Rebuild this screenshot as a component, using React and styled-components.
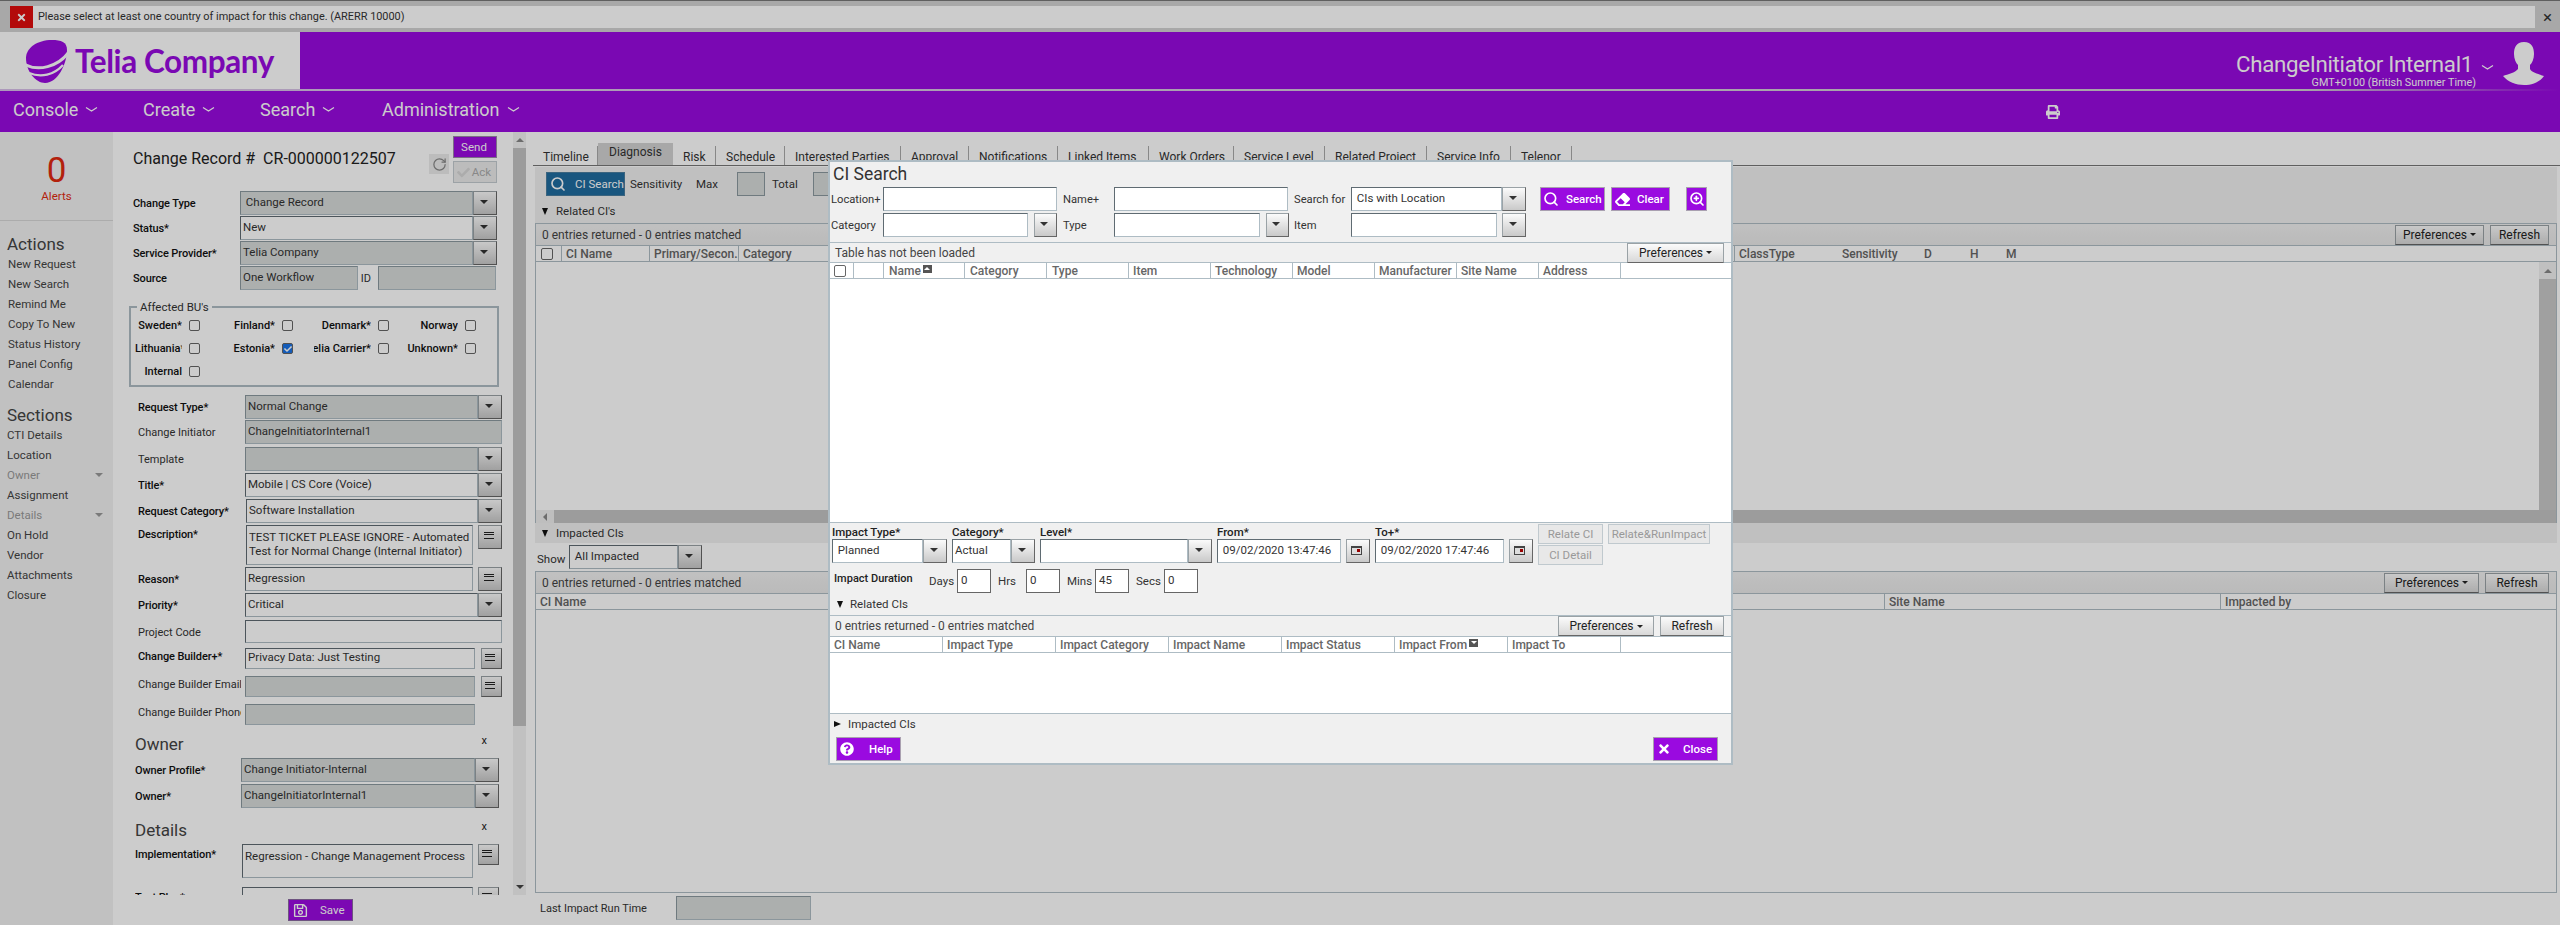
import React from "react";
import styled, { createGlobalStyle } from "styled-components";
import { FaTimes, FaQuestionCircle, FaRegSave, FaEraser, FaPrint, FaCheck } from "react-icons/fa";
import { Search as SearchIcon, ZoomIn, RotateCw } from "lucide-react";

const Global = createGlobalStyle`
  html, body { margin: 0; padding: 0; background: #fff; }
  body { font-family: Roboto, "Liberation Sans", sans-serif; font-size: 12px; color: #222; }
  * { box-sizing: border-box; }
`;

const PURPLE = "#9a0ae0";
const EDGE = "#aebcc4";

const Page = styled.div`
  position: relative;
  width: 2560px;
  height: 925px;
  overflow: hidden;
  display: flex;
  flex-direction: column;
`;
const Overlay = styled.div`
  position: absolute;
  inset: 0;
  background: rgba(0, 0, 0, 0.2);
  z-index: 1;
`;

/* error bar */
const ErrorBar = styled.div`
  height: 32px;
  flex: none;
  display: flex;
  align-items: stretch;
  padding: 6px 0 4px 10px;
  background: #d2d2d2;
  border-top: 1px solid #777;
`;
const ErrorIcon = styled.div`
  width: 23px;
  margin-top: -1px;
  background: #e00d0d;
  color: #fff;
  display: flex;
  align-items: center;
  justify-content: center;
  font-size: 11px;
`;
const ErrorText = styled.div`
  flex: 1;
  margin-top: -1px;
  background: #fff;
  padding-left: 5px;
  line-height: 22px;
  font-size: 10.9px;
  color: #333;
`;
const ErrorClose = styled.div`
  width: 25px;
  margin-top: -1px;
  display: flex;
  align-items: center;
  justify-content: center;
  color: #333;
  font-size: 17px;
`;

/* header */
const Header = styled.header`
  height: 57px;
  flex: none;
  display: flex;
  background: #990ae0;
`;
const LogoBox = styled.div`
  width: 300px;
  background: #fff;
  display: flex;
  align-items: center;
  padding-left: 26px;
  gap: 7px;
`;
const LogoText = styled.div`
  font-family: Lato, sans-serif;
  font-weight: 700;
  font-size: 31.5px;
  color: #990ae0;
  letter-spacing: -0.4px;
  white-space: nowrap;
  padding-top: 1px;
`;
const User = styled.div`
  flex: 1;
  display: flex;
  justify-content: flex-end;
  color: #fff;
  padding: 10px 15px 0 0;
`;
const UserText = styled.div`
  display: flex;
  flex-direction: column;
  align-items: flex-end;
`;
const UserName = styled.div`
  font-size: 22.3px;
  line-height: 28px;
  margin-top: 8px;
  margin-right: 3px;
  letter-spacing: -0.3px;
`;
const UserZone = styled.div`
  font-size: 10.8px;
  line-height: 14px;
  margin-top: -2px;
`;
const UserCaret = styled.div`
  margin: 18px 9px 0 5px;
`;
const HeaderRule = styled.div`
  height: 2px;
  flex: none;
  background: linear-gradient(to right, #d9c0ea, #d0d0d0 90%, #990ae0 100%);
`;
const Nav = styled.nav`
  height: 41px;
  flex: none;
  background: #990ae0;
  color: #fff;
  display: flex;
  align-items: center;
  padding-bottom: 4px;
`;
const NavItem = styled.div`
  width: ${(p) => p.$w}px;
  padding-left: ${(p) => p.$pl || 0}px;
  display: flex;
  align-items: center;
  gap: 7px;
  font-size: 18px;
  white-space: nowrap;
`;
const PrintBox = styled.div`
  margin-left: 1494px;
  margin-top: 4px;
  font-size: 14px;
  display: flex;
`;

/* body */
const Main = styled.div`
  flex: 1;
  display: flex;
  min-height: 0;
`;
const Sidebar = styled.aside`
  width: 113px;
  flex: none;
  background: #f2f2f2;
`;
const Alerts = styled.div`
  height: 89px;
  border-bottom: 1px solid #d8d8d8;
  text-align: center;
  color: #e02a10;
`;
const AlertCount = styled.div`
  font-size: 35px;
  line-height: 40px;
  padding-top: 19px;
  box-sizing: content-box;
`;
const AlertLabel = styled.div`
  font-size: 11.5px;
  margin-top: -2px;
`;
const SideHead = styled.div`
  font-size: 17px;
  line-height: 20px;
  color: #444;
  padding-left: 7px;
  margin-top: ${(p) => p.$mt}px;
`;
const SideLink = styled.div`
  height: 20px;
  line-height: 20px;
  font-size: 11.5px;
  padding-left: ${(p) => p.$pl || 7}px;
  padding-right: 10px;
  display: flex;
  align-items: center;
  justify-content: space-between;
  color: ${(p) => (p.$muted ? "#999" : "#444")};
`;
const Caret = styled.i`
  display: block;
  width: 0;
  height: 0;
  border-left: ${(p) => p.$s || 4}px solid transparent;
  border-right: ${(p) => p.$s || 4}px solid transparent;
  border-top: ${(p) => p.$s || 4}px solid ${(p) => p.$c || "#444"};
`;

const FormColumn = styled.div`
  width: 413px;
  flex: none;
  display: flex;
  flex-direction: column;
`;
const FormScroll = styled.div`
  height: 763px;
  display: flex;
  overflow: hidden;
`;
const FormBody = styled.div`
  width: 400px;
  flex: none;
  overflow: hidden;
`;
const VScroll = styled.div`
  width: 13px;
  background: #f2f2f2;
  display: flex;
  flex-direction: column;
  align-items: center;
  justify-content: space-between;
  padding: 6px 0;
`;
const VThumb = styled.div`
  flex: none;
  width: 100%;
  height: 578px;
  background: #c4c4c4;
  margin-top: 6px;
  margin-bottom: auto;
`;
const UpTri = styled.i`
  display: block;
  width: 0;
  height: 0;
  border-left: 4px solid transparent;
  border-right: 4px solid transparent;
  border-bottom: 4px solid #888;
`;
const SaveBar = styled.div`
  flex: 1;
  display: flex;
  padding: 4px 0 0 175px;
`;
const RecordHead = styled.div`
  height: 59px;
  display: flex;
  padding: 4px 0 0 20px;
`;
const RecordTitle = styled.div`
  width: 296px;
  font-size: 16px;
  line-height: 22px;
  margin-top: 12px;
  white-space: pre;
  color: #222;
`;
const RefreshBox = styled.div`
  width: 20px;
  height: 20px;
  margin-top: 18px;
  background: #ececec;
  color: #888;
  display: flex;
  align-items: center;
  justify-content: center;
`;
const RecordButtons = styled.div`
  margin-left: 4px;
  display: flex;
  flex-direction: column;
  gap: 3px;
`;
const SmallButton = styled.div`
  width: 44px;
  height: 22px;
  display: flex;
  align-items: center;
  justify-content: ${(p) => (p.$ghost ? "space-between" : "center")};
  padding: 0 5px 0 3px;
  font-size: 11.5px;
  background: ${(p) => (p.$ghost ? "#ececec" : PURPLE)};
  color: ${(p) => (p.$ghost ? "#aaa" : "#fff")};
  border: 1px solid ${(p) => (p.$ghost ? "#c4cbd0" : "#9c8aa8")};
`;

const Row = styled.div`
  display: flex;
  height: ${(p) => p.$h || 24}px;
  margin-top: ${(p) => p.$mt || 0}px;
  padding-left: ${(p) => p.$pl || 20}px;
`;
const Label = styled.div`
  width: ${(p) => p.$w || 107}px;
  flex: none;
  padding-top: ${(p) => p.$pt || 6}px;
  line-height: 14px;
  font-size: 11px;
  font-weight: ${(p) => (p.$bold ? 500 : 400)};
  letter-spacing: ${(p) => (p.$bold ? "-0.1px" : "0")};
  color: ${(p) => (p.$bold ? "#111" : "#333")};
  white-space: nowrap;
  overflow: hidden;
`;
const Field = styled.div`
  width: ${(p) => p.$w}px;
  height: ${(p) => p.$h || 24}px;
  flex: none;
  margin-left: ${(p) => p.$ml || 0}px;
  background: ${(p) => (p.$off ? "#d8dbda" : "#fff")};
  border: 1px solid ${EDGE};
  border-top-color: ${(p) => (p.$off ? "#8b999f" : "#5f6b72")};
  border-left-color: ${(p) => (p.$off ? "#8b999f" : "#5f6b72")};
  padding: ${(p) => (p.$tall ? "4px 2px" : "0 2px")};
  line-height: ${(p) => (p.$tall ? "14px" : `${(p.$h || 24) - 4}px`)};
  font-size: 11.5px;
  color: #333;
  overflow: hidden;
  white-space: ${(p) => (p.$tall ? "normal" : "nowrap")};
`;
const ArrowBtn = styled.div`
  width: ${(p) => p.$w || 24}px;
  height: ${(p) => p.$h || 24}px;
  flex: none;
  margin-left: ${(p) => p.$ml || 0}px;
  border: 1px solid #9aa2a6;
  border-bottom-color: #666;
  border-right-color: #666;
  background: linear-gradient(#fbfbfb, #c9c9c9);
  display: flex;
  align-items: center;
  justify-content: center;
  padding: 0 3px 3px 0;
`;
const MenuLines = styled.i`
  display: block;
  width: 10px;
  height: 7px;
  border-top: 1px solid #222;
  border-bottom: 1px solid #222;
  position: relative;
  &::before {
    content: "";
    position: absolute;
    left: 0;
    right: 0;
    top: 1px;
    height: 3px;
    border-top: 1px solid #222;
    border-bottom: 1px solid #222;
  }
`;
const BuSet = styled.fieldset`
  margin: 10px 14px 0 16px;
  padding: 0 0 2px 0;
  border: 2px solid ${EDGE};
  min-width: 0;
`;
const BuLegend = styled.legend`
  margin-left: 6px;
  padding: 0 3px;
  font-size: 11.5px;
  line-height: 14px;
  color: #333;
`;
const BuGrid = styled.div`
  display: grid;
  grid-template-columns: 69px 93px 96px 87px;
  grid-auto-rows: 23px;
`;
const BuItem = styled.div`
  display: flex;
  align-items: center;
  justify-content: flex-end;
  gap: 7px;
`;
const BuName = styled.div`
  width: ${(p) => p.$w}px;
  display: flex;
  justify-content: ${(p) => (p.$start ? "flex-start" : "flex-end")};
  overflow: hidden;
  white-space: nowrap;
  font-size: 11px;
  font-weight: 500;
  color: #111;
`;
const Check = styled.div`
  width: 11px;
  height: 11px;
  flex: none;
  border: 1px solid #666;
  border-radius: 2px;
  background: ${(p) => (p.$on ? "#1a73e8" : "#fff")};
  color: #fff;
  font-size: 8px;
  display: flex;
  align-items: center;
  justify-content: center;
`;
const GroupHead = styled.div`
  height: 20px;
  margin-top: ${(p) => p.$mt}px;
  padding: 0 26px 0 22px;
  display: flex;
  justify-content: space-between;
  font-size: 17px;
  line-height: 20px;
  color: #444;
`;
const GroupClose = styled.span`
  font-size: 11px;
  line-height: 14px;
  color: #222;
`;
const SaveButton = styled.div`
  width: 65px;
  height: 22px;
  display: flex;
  align-items: center;
  gap: 12px;
  padding-left: 4px;
  font-size: 11.5px;
  background: ${PURPLE};
  color: #fff;
  border: 1px solid #8a6aa0;
`;

/* right pane */
const Pane = styled.div`
  flex: 1;
  min-width: 0;
  padding-left: 7px;
  display: flex;
  flex-direction: column;
`;
const Tabs = styled.div`
  display: flex;
  height: 34px;
  flex: none;
  align-items: flex-end;
  border-bottom: 1px solid #777;
  width: 2027px;
`;
const Tab = styled.div`
  width: ${(p) => p.$w}px;
  height: ${(p) => (p.$on ? 22 : 19)}px;
  padding-left: ${(p) => (p.$on ? 11 : 10)}px;
  line-height: ${(p) => (p.$on ? 19 : 22)}px;
  font-size: 12px;
  white-space: nowrap;
  color: #333;
  background: ${(p) => (p.$on ? "#d2d2d2" : "transparent")};
  border-right: 1px solid ${(p) => (p.$on ? "transparent" : "#aaa")};
`;
const PaneInner = styled.div`
  flex: 1;
  min-height: 0;
  margin: 1px 3px 0 2px;
  display: flex;
  flex-direction: column;
`;
const RelatedTop = styled.div`
  height: 56px;
  flex: none;
  background: #f1f1f1;
  padding: 5px 0 0 11px;
`;
const Toolbar = styled.div`
  display: flex;
  align-items: center;
  height: 24px;
`;
const BlueButton = styled.div`
  width: 79px;
  height: 24px;
  display: flex;
  align-items: center;
  gap: 9px;
  padding-left: 3px;
  background: #206c9f;
  border: 1px solid #4a7d9f;
  color: #fff;
  font-size: 11.5px;
`;
const ToolLabel = styled.div`
  width: ${(p) => p.$w}px;
  margin-left: ${(p) => p.$ml || 0}px;
  color: #333;
  font-size: 11.5px;
`;
const ToolBox = styled.div`
  width: 28px;
  height: 24px;
  flex: none;
  background: #d8dbda;
  border: 1px solid #8b999f;
`;
const Disclosure = styled.div`
  display: flex;
  align-items: center;
  gap: ${(p) => p.$gap || 8}px;
  margin-top: ${(p) => p.$mt || 0}px;
  margin-left: ${(p) => p.$ml || 0}px;
  font-size: 11.5px;
  line-height: 14px;
  color: #333;
`;
const DownTri = styled.i`
  display: block;
  width: 0;
  height: 0;
  border-left: 3.5px solid transparent;
  border-right: 3.5px solid transparent;
  border-top: 7px solid #111;
`;
const RightTri = styled.i`
  display: block;
  width: 0;
  height: 0;
  border-top: 3.5px solid transparent;
  border-bottom: 3.5px solid transparent;
  border-left: 7px solid #111;
`;
const ResultTable = styled.div`
  height: ${(p) => p.$h}px;
  flex: none;
  border: 1px solid ${EDGE};
  border-bottom: ${(p) => (p.$flat ? "none" : `1px solid ${EDGE}`)};
  display: flex;
  flex-direction: column;
`;
const Strip = styled.div`
  height: ${(p) => p.$h || 22}px;
  flex: none;
  display: flex;
  align-items: center;
  justify-content: space-between;
  padding: 0 ${(p) => p.$pr || 7}px 0 ${(p) => p.$pl || 6}px;
  background: ${(p) => p.$bg || "linear-gradient(#f1f1f1, #e9e9e9)"};
  border-bottom: 1px solid ${EDGE};
  font-size: 12px;
  color: #444;
`;
const StripButtons = styled.div`
  display: flex;
  gap: 6px;
`;
const GreyButton = styled.div`
  width: ${(p) => p.$w}px;
  height: 20px;
  flex: none;
  display: flex;
  align-items: center;
  justify-content: center;
  gap: 3px;
  font-size: 12px;
  color: #222;
  background: linear-gradient(#fbfbfb, #d8d8d8);
  border: 1px solid #9aa2a6;
  border-bottom-color: #666;
`;
const ColHead = styled.div`
  height: ${(p) => p.$h || 16}px;
  flex: none;
  display: flex;
  background: #fff;
  border-bottom: 1px solid ${EDGE};
`;
const Col = styled.div`
  width: ${(p) => p.$w}px;
  flex: none;
  display: flex;
  align-items: center;
  gap: 2px;
  padding-left: ${(p) => p.$pl || 4}px;
  border-right: ${(p) => (p.$plain ? "none" : `1px solid ${EDGE}`)};
  font-size: 12px;
  font-weight: 500;
  color: #666;
  white-space: nowrap;
  overflow: hidden;
`;
const SortMark = styled.b`
  width: 9px;
  height: 8px;
  flex: none;
  margin-top: -4px;
  background: #555;
  display: flex;
  align-items: center;
  justify-content: center;
  &::after {
    content: "";
    border-left: 3px solid transparent;
    border-right: 3px solid transparent;
    ${(p) => (p.$down ? "border-top: 3px solid #fff;" : "border-bottom: 3px solid #fff;")}
  }
`;
const TableBody = styled.div`
  flex: 1;
  min-height: 0;
  background: #fff;
  display: flex;
  justify-content: flex-end;
`;
const TableScroll = styled.div`
  width: 17px;
  background: #f0f0f0;
  display: flex;
  flex-direction: column;
  align-items: center;
  padding-top: 7px;
  gap: 6px;
`;
const TableThumb = styled.div`
  flex: 1;
  width: 100%;
  background: #c8c8c8;
`;
const HScroll = styled.div`
  height: 13px;
  flex: none;
  background: #c4c4c4;
  display: flex;
`;
const HArrow = styled.div`
  width: 18px;
  background: #eee;
  display: flex;
  align-items: center;
  justify-content: center;
  &::after {
    content: "";
    border-top: 4px solid transparent;
    border-bottom: 4px solid transparent;
    border-right: 4px solid #888;
  }
`;
const ImpactedBar = styled.div`
  height: 20px;
  flex: none;
  background: #f1f1f1;
  display: flex;
  align-items: center;
  padding-left: 7px;
`;
const ShowRow = styled.div`
  height: 24px;
  flex: none;
  margin: 2px 0;
  display: flex;
  align-items: center;
  padding-left: 2px;
`;
const ShowLabel = styled.div`
  width: 32px;
  flex: none;
  color: #333;
  font-size: 11.5px;
  padding-top: 3px;
`;
const LastRun = styled.div`
  display: flex;
  align-items: center;
  margin-top: 3px;
  padding-left: 5px;
  height: 24px;
  color: #333;
`;

/* CI Search dialog */
const Modal = styled.div`
  position: absolute;
  left: 828px;
  top: 160px;
  width: 905px;
  height: 605px;
  z-index: 2;
  background: #f0f0f0;
  border: 2px solid ${EDGE};
  display: flex;
  flex-direction: column;
`;
const ModalTitle = styled.div`
  height: 25px;
  flex: none;
  padding-left: 3px;
  font-size: 17.5px;
  line-height: 25px;
  color: #333;
`;
const SearchRow = styled.div`
  display: flex;
  height: 24px;
  margin-bottom: 2px;
  padding-left: 1px;
`;
const SearchLabel = styled.div`
  width: ${(p) => p.$w}px;
  flex: none;
  margin-left: ${(p) => p.$ml || 0}px;
  line-height: 26px;
  font-size: 11.2px;
  color: #333;
  white-space: nowrap;
`;
const PurpleButton = styled.div`
  width: ${(p) => p.$w}px;
  height: 24px;
  flex: none;
  margin-left: ${(p) => p.$ml || 0}px;
  display: flex;
  align-items: center;
  justify-content: ${(p) => (p.$solo ? "center" : "flex-start")};
  gap: ${(p) => p.$gap || 7}px;
  padding-left: ${(p) => (p.$solo ? 0 : p.$pl || 2)}px;
  background: ${PURPLE};
  border: 1px solid #a9a0b0;
  color: #fff;
  font-size: 11.5px;
  font-weight: 500;
`;
const ModalStrip = styled(Strip)`
  margin-top: ${(p) => p.$mt || 0}px;
  border-top: 1px solid ${EDGE};
  background: #f0f0f0;
`;
const ResultBody = styled.div`
  height: ${(p) => p.$h}px;
  flex: none;
  background: #fff;
  border-bottom: 1px solid ${EDGE};
`;
const ImpactForm = styled.div`
  height: 92px;
  flex: none;
  display: flex;
  flex-direction: column;
`;
const ImpactFields = styled.div`
  display: flex;
  height: 46px;
  flex: none;
  padding-left: 2px;
`;
const FieldCol = styled.div`
  width: ${(p) => p.$w}px;
  flex: none;
  margin-right: 5px;
`;
const FieldCaption = styled.div`
  height: 16px;
  padding-top: 3px;
  line-height: 13px;
  font-size: 11.5px;
  font-weight: 500;
  color: #222;
`;
const FieldLine = styled.div`
  display: flex;
  justify-content: space-between;
`;
const ActionCol = styled.div`
  display: flex;
  flex-direction: column;
  gap: 1px;
  margin: 1px 5px 0 0;
`;
const GhostButton = styled.div`
  width: ${(p) => p.$w}px;
  height: 20px;
  display: flex;
  align-items: center;
  justify-content: center;
  font-size: 11.5px;
  color: #999;
  background: #e8e8e8;
  border: 1px solid #c0c9ce;
`;
const DurationRow = styled.div`
  display: flex;
  height: 24px;
  padding-left: 4px;
  align-items: center;
`;
const DurationTitle = styled.div`
  width: 95px;
  flex: none;
  margin-top: -5px;
  font-weight: 500;
  font-size: 11px;
  color: #222;
`;
const DurationLabel = styled.div`
  width: 28px;
  flex: none;
  color: #333;
  font-size: 11.5px;
`;
const DurationInput = styled.div`
  width: 34px;
  height: 24px;
  flex: none;
  margin-right: 7px;
  background: #fff;
  border: 1px solid #666;
  padding-left: 3px;
  line-height: 20px;
  font-size: 11.5px;
  color: #333;
`;
const ModalFooter = styled.div`
  display: flex;
  justify-content: space-between;
  padding: 6px 13px 0 6px;
`;
const CalIcon = styled.svg`
  display: block;
  margin-top: 1px;
`;
const HeadCheck = styled(Check)`
  width: 12px;
  height: 12px;
`;

const Chevron = () => (
  <svg width="13" height="7" viewBox="0 0 13 7" fill="none">
    <path d="M1 1.5 L6.5 5 L12 1.5" stroke="currentColor" strokeWidth="1.3" />
  </svg>
);
const Menu = (props) => (
  <ArrowBtn {...props}>
    <MenuLines />
  </ArrowBtn>
);
const Drop = (props) => (
  <ArrowBtn {...props}>
    <Caret $s={4} $c="#333" />
  </ArrowBtn>
);
const Calendar = () => (
  <ArrowBtn>
    <CalIcon width="11" height="9" viewBox="0 0 11 9">
      <rect x="0" y="0" width="11" height="9" fill="#444" />
      <rect x="1" y="2" width="9" height="6" fill="#ddd" />
      <rect x="6" y="3" width="3" height="3" fill="#900" />
    </CalIcon>
  </ArrowBtn>
);

const tabs = [
  ["Timeline", 65],
  ["Diagnosis", 75, true],
  ["Risk", 43],
  ["Schedule", 69],
  ["Interested Parties", 116],
  ["Approval", 68],
  ["Notifications", 89],
  ["Linked Items", 91],
  ["Work Orders", 85],
  ["Service Level", 91],
  ["Related Project", 102],
  ["Service Info", 84],
  ["Telenor", 61],
];
const actions = ["New Request", "New Search", "Remind Me", "Copy To New", "Status History", "Panel Config", "Calendar"];
const sections = [
  ["CTI Details"],
  ["Location"],
  ["Owner", true],
  ["Assignment"],
  ["Details", true],
  ["On Hold"],
  ["Vendor"],
  ["Attachments"],
  ["Closure"],
];
const units = [
  ["Sweden*", 47],
  ["Finland*", 60],
  ["Denmark*", 57],
  ["Norway", 60],
  ["Lithuania*", 47, false, true],
  ["Estonia*", 60, true],
  ["Telia Carrier*", 57],
  ["Unknown*", 60],
  ["Internal", 47],
];
const searchCols = [
  ["Item", 82],
  ["Technology", 82],
  ["Model", 82],
  ["Manufacturer", 82],
  ["Site Name", 82],
  ["Address", 82],
];
const impactCols = ["CI Name", "Impact Type", "Impact Category", "Impact Name", "Impact Status"];

const Logo = () => (
  <svg width="42" height="44" viewBox="0 0 42 44">
    <path d="M0 19 C0 9 11 1 26 1 C35 1 41 3 41 11 C41 24 32 44 19 44 C10 44 0 33 0 19 Z" fill="#990ae0" />
    <path d="M-2 25 C12 33 32 28 43 13" stroke="#fff" strokeWidth="3" fill="none" />
    <path d="M3 34 C15 39 28 36 37 26" stroke="#fff" strokeWidth="2.4" fill="none" />
  </svg>
);
const Avatar = () => (
  <svg width="42" height="44" viewBox="0 0 42 44">
    <path
      d="M21 0 C13 0 11 6 11 12 C11 17 13 21 15 23 L15 27 C12 31 5 32 0 34 C5 40 13 43 21 43 C29 43 37 40 41 34 C36 32 29 31 27 27 L27 23 C29 21 31 17 31 12 C31 6 29 0 21 0 Z"
      fill="#fff"
    />
  </svg>
);

export default function App() {
  return (
    <Page>
      <Global />
      <ErrorBar>
        <ErrorIcon>
          <FaTimes />
        </ErrorIcon>
        <ErrorText>Please select at least one country of impact for this change. (ARERR 10000)</ErrorText>
        <ErrorClose>×</ErrorClose>
      </ErrorBar>

      <Header>
        <LogoBox>
          <Logo />
          <LogoText>Telia Company</LogoText>
        </LogoBox>
        <User>
          <UserText>
            <UserName>ChangeInitiator Internal1</UserName>
            <UserZone>GMT+0100 (British Summer Time)</UserZone>
          </UserText>
          <UserCaret>
            <Chevron />
          </UserCaret>
          <Avatar />
        </User>
      </Header>
      <HeaderRule />
      <Nav>
        <NavItem $w={143} $pl={13}>
          Console <Chevron />
        </NavItem>
        <NavItem $w={117}>
          Create <Chevron />
        </NavItem>
        <NavItem $w={122}>
          Search <Chevron />
        </NavItem>
        <NavItem $w={170}>
          Administration <Chevron />
        </NavItem>
        <PrintBox>
          <FaPrint />
        </PrintBox>
      </Nav>

      <Main>
        <Sidebar>
          <Alerts>
            <AlertCount>0</AlertCount>
            <AlertLabel>Alerts</AlertLabel>
          </Alerts>
          <SideHead $mt={13}>Actions</SideHead>
          {actions.map((a) => (
            <SideLink key={a} $pl={8}>
              {a}
            </SideLink>
          ))}
          <SideHead $mt={11}>Sections</SideHead>
          {sections.map(([s, muted]) => (
            <SideLink key={s} $muted={muted}>
              {s}
              {muted && <Caret $s={4} $c="#999" />}
            </SideLink>
          ))}
        </Sidebar>

        <FormColumn>
          <FormScroll>
            <FormBody>
              <RecordHead>
                <RecordTitle>Change Record #  CR-000000122507</RecordTitle>
                <RefreshBox>
                  <RotateCw size={15} />
                </RefreshBox>
                <RecordButtons>
                  <SmallButton>Send</SmallButton>
                  <SmallButton $ghost>
                    <FaCheck size={13} color="#d8d8d8" />
                    Ack
                  </SmallButton>
                </RecordButtons>
              </RecordHead>

              <Row>
                <Label $bold>Change Type</Label>
                <Field $w={233} $off>
                  &nbsp;Change Record
                </Field>
                <Drop />
              </Row>
              <Row $mt={1}>
                <Label $bold>Status*</Label>
                <Field $w={233}>New</Field>
                <Drop />
              </Row>
              <Row $mt={1}>
                <Label $bold>Service Provider*</Label>
                <Field $w={233} $off>
                  Telia Company
                </Field>
                <Drop />
              </Row>
              <Row $mt={1}>
                <Label $bold>Source</Label>
                <Field $w={118} $off>
                  One Workflow
                </Field>
                <Label $w={20}>&nbsp;ID</Label>
                <Field $w={118} $off />
              </Row>

              <BuSet>
                <BuLegend>Affected BU's</BuLegend>
                <BuGrid>
                  {units.map(([name, w, on, start]) => (
                    <BuItem key={name}>
                      <BuName $w={w} $start={start}>
                        <span>{name}</span>
                      </BuName>
                      <Check $on={on}>{on && <FaCheck />}</Check>
                    </BuItem>
                  ))}
                </BuGrid>
              </BuSet>

              <Row $mt={8} $pl={25}>
                <Label $bold>Request Type*</Label>
                <Field $w={233} $off>
                  Normal Change
                </Field>
                <Drop />
              </Row>
              <Row $mt={1} $pl={25}>
                <Label>Change Initiator</Label>
                <Field $w={257} $off>
                  ChangeInitiatorInternal1
                </Field>
              </Row>
              <Row $mt={3} $pl={25}>
                <Label>Template</Label>
                <Field $w={233} $off />
                <Drop />
              </Row>
              <Row $mt={2} $pl={25}>
                <Label $bold>Title*</Label>
                <Field $w={233}>Mobile | CS Core (Voice)</Field>
                <Drop />
              </Row>
              <Row $mt={2} $pl={25}>
                <Label $bold $w={108}>
                  Request Category*
                </Label>
                <Field $w={232}>Software Installation</Field>
                <Drop />
              </Row>
              <Row $mt={2} $pl={25} $h={40}>
                <Label $bold $w={108} $pt={3}>
                  Description*
                </Label>
                <Field $w={227} $h={40} $tall>
                  TEST TICKET PLEASE IGNORE - Automated Test for Normal Change (Internal Initiator)
                </Field>
                <Menu $ml={5} />
              </Row>
              <Row $mt={2} $pl={25}>
                <Label $bold>Reason*</Label>
                <Field $w={228}>Regression</Field>
                <Menu $ml={5} />
              </Row>
              <Row $mt={2} $pl={25}>
                <Label $bold>Priority*</Label>
                <Field $w={233}>Critical</Field>
                <Drop />
              </Row>
              <Row $mt={3} $pl={25} $h={23}>
                <Label>Project Code</Label>
                <Field $w={257} $h={23} />
              </Row>
              <Row $mt={5} $pl={25} $h={21}>
                <Label $bold $pt={2}>
                  Change Builder+*
                </Label>
                <Field $w={230} $h={21}>
                  Privacy Data: Just Testing
                </Field>
                <Menu $ml={6} $w={21} $h={21} />
              </Row>
              <Row $mt={7} $pl={25} $h={21}>
                <Label $pt={2} $w={103}>
                  Change Builder Email
                </Label>
                <Field $ml={4} $w={230} $h={21} $off />
                <Menu $ml={6} $w={21} $h={21} />
              </Row>
              <Row $mt={7} $pl={25} $h={21}>
                <Label $pt={2} $w={103}>
                  Change Builder Phone
                </Label>
                <Field $ml={4} $w={230} $h={21} $off />
              </Row>

              <GroupHead $mt={9}>
                Owner
                <GroupClose>x</GroupClose>
              </GroupHead>
              <Row $mt={4} $pl={22} $h={24}>
                <Label $bold $w={106}>
                  Owner Profile*
                </Label>
                <Field $w={234} $off>
                  Change Initiator-Internal
                </Field>
                <Drop />
              </Row>
              <Row $mt={2} $pl={22}>
                <Label $bold $w={106}>
                  Owner*
                </Label>
                <Field $w={234} $off>
                  ChangeInitiatorInternal1
                </Field>
                <Drop />
              </Row>
              <GroupHead $mt={12}>
                Details
                <GroupClose>x</GroupClose>
              </GroupHead>
              <Row $mt={4} $pl={22} $h={34}>
                <Label $bold $w={107} $pt={4}>
                  Implementation*
                </Label>
                <Field $w={231} $h={34} $tall>
                  Regression - Change Management Process
                </Field>
                <Menu $ml={5} $w={21} $h={21} />
              </Row>
              <Row $mt={9} $pl={22} $h={34}>
                <Label $bold $w={107} $pt={4}>
                  Test Plan*
                </Label>
                <Field $w={231} $h={34} $tall>
                  Regression - Change Management Process
                </Field>
                <Menu $ml={5} $w={21} $h={21} />
              </Row>
            </FormBody>
            <VScroll>
              <UpTri />
              <VThumb />
              <Caret $s={4} $c="#444" />
            </VScroll>
          </FormScroll>
          <SaveBar>
            <SaveButton>
              <FaRegSave size={15} />
              Save
            </SaveButton>
          </SaveBar>
        </FormColumn>

        <Pane>
          <Tabs>
            {tabs.map(([t, w, on]) => (
              <Tab key={t} $w={w} $on={on}>
                {t}
              </Tab>
            ))}
          </Tabs>
          <PaneInner>
            <RelatedTop>
              <Toolbar>
                <BlueButton>
                  <SearchIcon size={16} strokeWidth={2.5} />
                  CI Search
                </BlueButton>
                <ToolLabel $ml={5} $w={66}>
                  Sensitivity
                </ToolLabel>
                <ToolLabel $w={41}>Max</ToolLabel>
                <ToolBox />
                <ToolLabel $ml={7} $w={41}>
                  Total
                </ToolLabel>
                <ToolBox />
              </Toolbar>
              <Disclosure $mt={8} $gap={8} $ml={-4}>
                <DownTri /> Related CI's
              </Disclosure>
            </RelatedTop>
            <ResultTable $h={300} $flat>
              <Strip>
                0 entries returned - 0 entries matched
                <StripButtons>
                  <GreyButton $w={89}>
                    Preferences <Caret $s={3.5} $c="#222" />
                  </GreyButton>
                  <GreyButton $w={59}>Refresh</GreyButton>
                </StripButtons>
              </Strip>
              <ColHead>
                <Col $w={26} $pl={5}>
                  <HeadCheck />
                </Col>
                <Col $w={88}>CI Name</Col>
                <Col $w={89}>Primary/Secon...</Col>
                <Col $w={996}>Category</Col>
                <Col $w={103} $plain>
                  ClassType
                </Col>
                <Col $w={82} $plain>
                  Sensitivity
                </Col>
                <Col $w={46} $plain>
                  D
                </Col>
                <Col $w={36} $plain>
                  H
                </Col>
                <Col $w={40} $plain>
                  M
                </Col>
              </ColHead>
              <TableBody>
                <TableScroll>
                  <UpTri />
                  <TableThumb />
                </TableScroll>
              </TableBody>
              <HScroll>
                <HArrow />
              </HScroll>
            </ResultTable>
            <ImpactedBar>
              <Disclosure $gap={8}>
                <DownTri /> Impacted CIs
              </Disclosure>
            </ImpactedBar>
            <ShowRow>
              <ShowLabel>Show</ShowLabel>
              <Field $w={109}>&nbsp;All Impacted</Field>
              <Drop />
            </ShowRow>
            <ResultTable $h={322}>
              <Strip $pr={7}>
                0 entries returned - 0 entries matched
                <StripButtons>
                  <GreyButton $w={95}>
                    Preferences <Caret $s={3.5} $c="#222" />
                  </GreyButton>
                  <GreyButton $w={64}>Refresh</GreyButton>
                </StripButtons>
              </Strip>
              <ColHead>
                <Col $w={1349} $pl={4}>
                  CI Name
                </Col>
                <Col $w={336}>Site Name</Col>
                <Col $w={337} $plain>
                  Impacted by
                </Col>
              </ColHead>
              <TableBody />
            </ResultTable>
            <LastRun>
              <Label $w={136} $pt={1}>
                Last Impact Run Time
              </Label>
              <Field $w={135} $off />
            </LastRun>
          </PaneInner>
        </Pane>
      </Main>

      <Overlay />

      <Modal>
        <ModalTitle>CI Search</ModalTitle>
        <SearchRow>
          <SearchLabel $w={52}>Location+</SearchLabel>
          <Field $w={174} />
          <SearchLabel $w={51} $ml={6}>
            Name+
          </SearchLabel>
          <Field $w={174} />
          <SearchLabel $w={57} $ml={6}>
            Search for
          </SearchLabel>
          <Field $w={151}>&nbsp;CIs with Location</Field>
          <Drop />
          <PurpleButton $w={65} $ml={14}>
            <SearchIcon size={16} strokeWidth={2.5} />
            Search
          </PurpleButton>
          <PurpleButton $w={59} $ml={6} $pl={3}>
            <FaEraser size={15} />
            Clear
          </PurpleButton>
          <PurpleButton $w={21} $ml={16} $solo>
            <ZoomIn size={16} strokeWidth={2.5} />
          </PurpleButton>
        </SearchRow>
        <SearchRow>
          <SearchLabel $w={52}>Category</SearchLabel>
          <Field $w={145} />
          <Drop $ml={6} $w={23} />
          <SearchLabel $w={51} $ml={6}>
            Type
          </SearchLabel>
          <Field $w={146} />
          <Drop $ml={6} $w={23} />
          <SearchLabel $w={57} $ml={5}>
            Item
          </SearchLabel>
          <Field $w={146} />
          <Drop $ml={5} />
        </SearchRow>

        <ModalStrip $h={21} $pl={5} $mt={3}>
          Table has not been loaded
          <GreyButton $w={97}>
            Preferences <Caret $s={3.5} $c="#222" />
          </GreyButton>
        </ModalStrip>
        <ColHead>
          <Col $w={24}>
            <HeadCheck />
          </Col>
          <Col $w={30} />
          <Col $w={81} $pl={5}>
            Name
            <SortMark />
          </Col>
          <Col $w={82} $pl={5}>
            Category
          </Col>
          <Col $w={82} $pl={5}>
            Type
          </Col>
          {searchCols.map(([c, w]) => (
            <Col key={c} $w={w}>
              {c}
            </Col>
          ))}
        </ColHead>
        <ResultBody $h={244} />

        <ImpactForm>
          <ImpactFields>
            <FieldCol $w={115}>
              <FieldCaption>Impact Type*</FieldCaption>
              <FieldLine>
                <Field $w={91}>&nbsp;Planned</Field>
                <Drop />
              </FieldLine>
            </FieldCol>
            <FieldCol $w={83}>
              <FieldCaption>Category*</FieldCaption>
              <FieldLine>
                <Field $w={59}>Actual</Field>
                <Drop />
              </FieldLine>
            </FieldCol>
            <FieldCol $w={172}>
              <FieldCaption>Level*</FieldCaption>
              <FieldLine>
                <Field $w={148} />
                <Drop />
              </FieldLine>
            </FieldCol>
            <FieldCol $w={153}>
              <FieldCaption>From*</FieldCaption>
              <FieldLine>
                <Field $w={124}>&nbsp;09/02/2020 13:47:46</Field>
                <Calendar />
              </FieldLine>
            </FieldCol>
            <FieldCol $w={158}>
              <FieldCaption>To+*</FieldCaption>
              <FieldLine>
                <Field $w={129}>&nbsp;09/02/2020 17:47:46</Field>
                <Calendar />
              </FieldLine>
            </FieldCol>
            <ActionCol>
              <GhostButton $w={65}>Relate CI</GhostButton>
              <GhostButton $w={65}>CI Detail</GhostButton>
            </ActionCol>
            <ActionCol>
              <GhostButton $w={102}>Relate&RunImpact</GhostButton>
            </ActionCol>
          </ImpactFields>
          <DurationRow>
            <DurationTitle>Impact Duration</DurationTitle>
            <DurationLabel>Days</DurationLabel>
            <DurationInput>0</DurationInput>
            <DurationLabel>Hrs</DurationLabel>
            <DurationInput>0</DurationInput>
            <DurationLabel>Mins</DurationLabel>
            <DurationInput>45</DurationInput>
            <DurationLabel>Secs</DurationLabel>
            <DurationInput>0</DurationInput>
          </DurationRow>
          <Disclosure $mt={4} $gap={7} $ml={7}>
            <DownTri /> Related CIs
          </Disclosure>
        </ImpactForm>

        <ModalStrip $h={22} $pl={5}>
          0 entries returned - 0 entries matched
          <StripButtons>
            <GreyButton $w={96}>
              Preferences <Caret $s={3.5} $c="#222" />
            </GreyButton>
            <GreyButton $w={64}>Refresh</GreyButton>
          </StripButtons>
        </ModalStrip>
        <ColHead>
          {impactCols.map((c) => (
            <Col key={c} $w={113}>
              {c}
            </Col>
          ))}
          <Col $w={113}>
            Impact From
            <SortMark $down />
          </Col>
          <Col $w={113}>Impact To</Col>
        </ColHead>
        <ResultBody $h={61} />
        <Disclosure $mt={3} $gap={7} $ml={4}>
          <RightTri /> Impacted CIs
        </Disclosure>
        <ModalFooter>
          <PurpleButton $w={65} $pl={3} $gap={15}>
            <FaQuestionCircle size={14} />
            Help
          </PurpleButton>
          <PurpleButton $w={65} $pl={3} $gap={12}>
            <FaTimes size={14} />
            Close
          </PurpleButton>
        </ModalFooter>
      </Modal>
    </Page>
  );
}
